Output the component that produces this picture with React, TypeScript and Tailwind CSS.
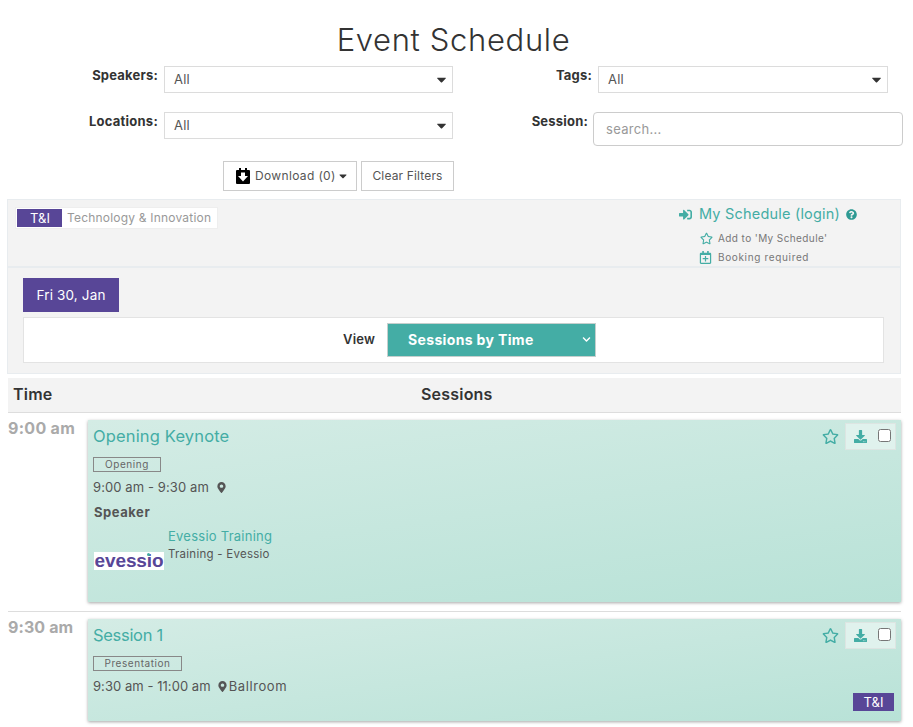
import React from "react";
import { FaSignInAlt, FaQuestionCircle, FaRegStar, FaRegCalendarPlus, FaDownload, FaMapMarkerAlt, FaCaretDown, FaChevronDown } from "react-icons/fa";

const font = { fontFamily: '"Inter", "Noto Sans", sans-serif' };

function Sel({ w }: { w: string }) {
  return (
    <div className={`${w} h-[27px] border border-[#dcdcdc] bg-white flex items-center justify-between pl-[9px] pr-[3px] text-[13px] tracking-[0.2px] text-[#555]`}>
      <span className="pt-[1px]">All</span>
      <FaCaretDown className="text-[#333] text-[15px]" />
    </div>
  );
}

function Actions() {
  return (
    <div className="flex items-start gap-[6px] pt-[3px] pr-[5px] self-start">
      <FaRegStar className="text-[#44ada5] text-[17px] mt-[5px]" />
      <div className="w-[51px] h-[27px] border border-[#dde5e2] bg-[#e0f2ed] flex items-center justify-between pl-[8px] pr-[4px]">
        <FaDownload className="text-[#44ada5] text-[13px]" />
        <input type="checkbox" className="w-[13px] h-[13px] mb-[3px]" readOnly />
      </div>
    </div>
  );
}

export default function App() {
  return (
    <div style={font} className="w-[913px] h-[727px] overflow-hidden bg-white text-[#333] relative">
      <h1 className="text-center text-[31px] leading-[38px] font-light text-[#333] pt-[21px] tracking-[0.65px] pr-[6px]">Event Schedule</h1>

      <div className="flex mt-[7px] h-[27px]">
        <div className="w-[158px] text-right font-bold text-[13px] leading-[18px] tracking-[0.2px]">Speakers:</div>
        <div className="ml-[6px]"><Sel w="w-[289px]" /></div>
        <div className="w-[139px] text-right font-bold text-[13px] leading-[18px] tracking-[0.2px]">Tags:</div>
        <div className="ml-[6px]"><Sel w="w-[290px]" /></div>
      </div>

      <div className="flex mt-[19px] h-[34px]">
        <div className="w-[158px] text-right font-bold text-[13px] leading-[18px] tracking-[0.25px]">Locations:</div>
        <div className="ml-[6px]"><Sel w="w-[289px]" /></div>
        <div className="w-[135px] text-right font-bold text-[13px] leading-[18px] tracking-[0.2px]">Session:</div>
        <div className="ml-[5px] w-[310px] h-[34px] border border-[#ccc] rounded-[4px] flex items-center pl-[12px] pt-[2px] text-[13px] tracking-[0.3px] text-[#999]">search...</div>
      </div>

      <div className="flex mt-[15px] ml-[223px] gap-[4px] text-[12px] text-[#555]">
        <div className="w-[134px] h-[30px] border border-[#ccc] flex items-center pl-[12px]">
          <svg width="14" height="16" viewBox="0 0 14 16" className="mr-[5px]">
            <path d="M1 2h2V0h2v2h4V0h2v2h2a1 1 0 0 1 1 1v12a1 1 0 0 1-1 1H1a1 1 0 0 1-1-1V3a1 1 0 0 1 1-1z" fill="#000" />
            <path d="M5 4.500h4v3.500h3L7 13.500 2 8h3z" fill="#fff" />
          </svg>
          <span className="tracking-[0.35px]">Download (0)</span>
          <FaCaretDown className="text-[#333] text-[12px] ml-[1px]" />
        </div>
        <div className="w-[93px] h-[30px] border border-[#ccc] flex items-center justify-center tracking-[0.15px]">Clear Filters</div>
      </div>

      <div className="mt-[8px] ml-[7px] w-[894px] h-[68px] bg-[#f3f3f3] border border-[#e8ecef] flex justify-between">
        <div className="ml-[7px] mt-[7px] h-[22px] bg-white border border-[#eee] flex items-center pl-[1px] pr-[6px]">
          <span className="w-[45px] h-[18px] bg-[#584697] text-white text-[13px] leading-[18px] text-center pl-[1px]">T&amp;I</span>
          <span className="ml-[5px] text-[12px] tracking-[0.2px] text-[#999]">Technology &amp; Innovation</span>
        </div>
        <div className="w-[222px] pt-[6px]">
          <div className="flex items-center text-[#44ada5] text-[14.5px] tracking-[0.2px] leading-[16px]">
            <FaSignInAlt className="text-[13px] ml-[1px]" />
            <span className="ml-[7px]">My Schedule (login)</span>
            <FaQuestionCircle className="ml-[6px] text-[11px] text-[#2e9a93]" />
          </div>
          <div className="flex items-center ml-[22px] mt-[8px] h-[16px] text-[10px] tracking-[0.4px] text-[#777]">
            <FaRegStar className="text-[#44ada5] text-[13px]" />
            <span className="ml-[5px]">Add to 'My Schedule'</span>
          </div>
          <div className="flex items-center ml-[21px] mt-[3px] h-[16px] text-[10px] tracking-[0.65px] text-[#777]">
            <FaRegCalendarPlus className="text-[#44ada5] text-[13px]" />
            <span className="ml-[6px]">Booking required</span>
          </div>
        </div>
      </div>

      <div className="ml-[7px] w-[894px] h-[107px] bg-[#f3f3f3] border border-[#e8ecef] px-[15px] pt-[10px]">
        <div className="w-[96px] h-[34px] bg-[#584697] text-white text-[13.5px] tracking-[0.15px] flex items-center justify-center">Fri 30, Jan</div>
        <div className="mt-[5px] w-[861px] h-[46px] bg-white border border-[#e3e3e3] flex items-center">
          <span className="ml-[319px] w-[33px] font-semibold text-[13px] tracking-[0.2px]">View</span>
          <div className="ml-[11px] w-[209px] h-[34px] bg-[#44ada5] border border-[#c5cfcd] flex items-center justify-between pl-[20px] pr-[4px] pb-[1px] text-white font-bold text-[14px] tracking-[0.35px]">
            <span>Sessions by Time</span>
            <FaChevronDown className="text-[9px]" />
          </div>
        </div>
      </div>

      <div className="mt-[4px] ml-[8px] w-[893px] h-[35px] bg-[#f3f3f3] border-b border-[#ddd] flex items-center pb-[3px] font-semibold text-[16px] tracking-[0.2px]">
        <span className="ml-[5px] w-[408px]">Time</span>
        <span>Sessions</span>
      </div>

      <div className="ml-[8px] w-[893px] h-[199px] border-b border-[#ddd] flex pt-[6px]">
        <div className="w-[80px] font-bold text-[16px] tracking-[0.3px] leading-[18px] text-[#aaa]">9:00 am</div>
        <div className="w-[813px] h-[182px] mt-[1px] bg-[linear-gradient(172deg,#d4ece5,#b8e2d7)] shadow-[0_1px_3px_rgba(0,0,0,0.35)] flex justify-between">
          <div className="pl-[6px] pt-[6px] flex-1 text-[#555]">
            <div className="-ml-[1px] text-[#44ada5] text-[16.500px] tracking-[0.15px] leading-[20px]">Opening Keynote</div>
            <div className="-ml-[1px] mt-[11px] w-[68px] h-[15px] border border-[#888] text-[10px] tracking-[0.55px] leading-[13px] text-center text-[#666]">Opening</div>
            <div className="-ml-[1px] mt-[6px] flex items-center text-[13px] tracking-[0.1px] leading-[18px]">
              <span>9:00 am - 9:30 am</span>
              <FaMapMarkerAlt className="ml-[7px] text-[11px]" />
            </div>
            <div className="mt-[7px] font-bold text-[13px] tracking-[0.55px] leading-[18px]">Speaker</div>
            <div className="mt-[6px] flex">
              <div className="w-[70px] h-[18px] mt-[25px] bg-white relative text-[#584697] font-bold text-[19px] leading-[18px] tracking-[-0.1px] text-center" style={{ fontFamily: '"Liberation Sans", sans-serif' }}>
                evessio
                <span className="absolute left-[53px] top-[1px] w-[3px] h-[3px] rounded-full bg-[#44ada5]" />
              </div>
              <div className="ml-[4px]">
                <div className="text-[#44ada5] text-[13px] tracking-[0.25px] leading-[18px]">Evessio Training</div>
                <div className="text-[11.500px] tracking-[0.25px] leading-[16px] mt-[1px]">Training - Evessio</div>
              </div>
            </div>
          </div>
          <Actions />
        </div>
      </div>

      <div className="ml-[8px] w-[893px] flex pt-[6px]">
        <div className="w-[80px] font-bold text-[16px] tracking-[0.1px] leading-[18px] text-[#aaa]">9:30 am</div>
        <div className="w-[813px] h-[102px] mt-[1px] bg-[linear-gradient(172deg,#d4ece5,#b8e2d7)] shadow-[0_1px_3px_rgba(0,0,0,0.35)] flex justify-between">
          <div className="pl-[5px] pt-[6px] flex-1 text-[#555]">
            <div className="text-[#44ada5] text-[16.500px] tracking-[-0.3px] leading-[20px]">Session 1</div>
            <div className="mt-[11px] w-[89px] h-[15px] border border-[#888] text-[10px] tracking-[0.55px] leading-[13px] text-center text-[#666]">Presentation</div>
            <div className="mt-[6px] flex items-center text-[13px] tracking-[0.05px] leading-[18px]">
              <span>9:30 am - 11:00 am</span>
              <FaMapMarkerAlt className="ml-[6px] text-[11px]" />
              <span className="ml-[1px] tracking-[0.6px]">Ballroom</span>
            </div>
          </div>
          <div className="flex flex-col items-end">
            <Actions />
            <div className="mt-[44px] mr-[7px] w-[41px] h-[18px] bg-[#584697] text-white text-[13px] leading-[18px] text-center">T&amp;I</div>
          </div>
        </div>
      </div>
    </div>
  );
}
